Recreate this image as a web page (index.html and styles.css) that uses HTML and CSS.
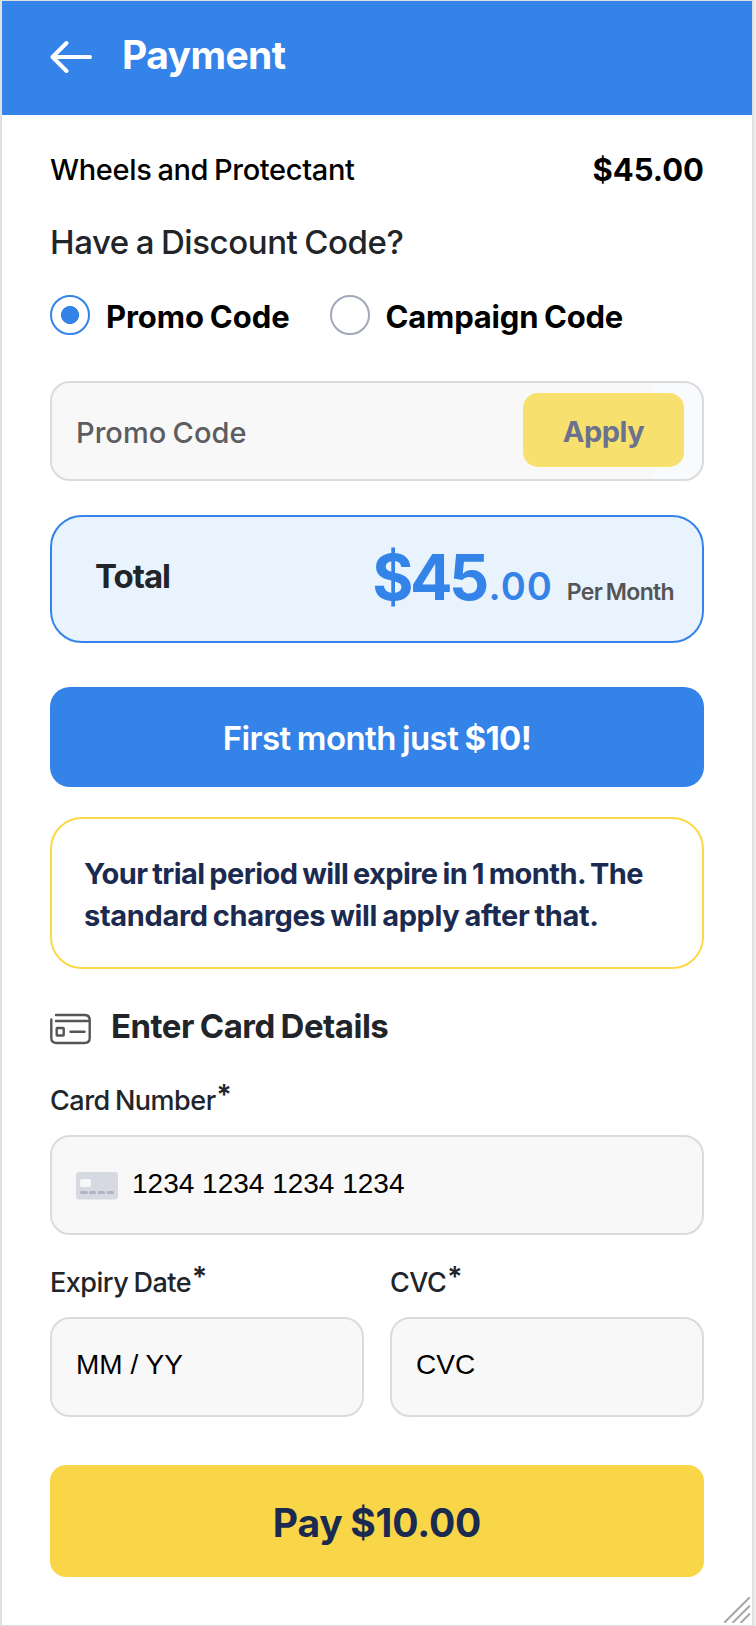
FILE: index.html
```html
<!DOCTYPE html>
<html lang="en">
<head>
    <meta charset="UTF-8">
    <title>Payment</title>
    <link rel="stylesheet" href="styles.css">
</head>
<body>
    <div class="screen">
        <header class="header">
            <svg class="back" width="42" height="34" viewBox="0 0 42 34" fill="none" stroke="#fff" stroke-width="4" stroke-linecap="round" stroke-linejoin="round">
                <path d="M40 17H3M16.500 3L2.500 17L16.500 31"/>
            </svg>
            <h1 class="title">Payment</h1>
        </header>

        <main class="content">
            <div class="item">
                <span class="item-name">Wheels and Protectant</span>
                <span class="item-price">$45.00</span>
            </div>

            <h2 class="question">Have a Discount Code?</h2>

            <div class="options">
                <label class="option">
                    <input type="radio" name="code" class="radio" checked>
                    <span class="promo-label">Promo Code</span>
                </label>
                <label class="option">
                    <input type="radio" name="code" class="radio">
                    <span class="campaign-label">Campaign Code</span>
                </label>
            </div>

            <div class="promo">
                <input type="text" class="promo-input" placeholder="Promo Code">
                <button class="apply">Apply</button>
            </div>

            <div class="total">
                <span class="total-label">Total</span>
                <div class="amount">
                    <span class="dollars">$45</span>
                    <span class="cents">.00</span>
                    <span class="period">Per Month</span>
                </div>
            </div>

            <div class="offer">First month just <b>$10!</b></div>

            <p class="notice">Your trial period will expire in 1 month. The<br><span class="notice-end">standard charges will apply after that.</span></p>

            <div class="card-title">
                <svg width="42" height="32" viewBox="0 0 42 32" fill="none" stroke="#555" stroke-width="2.400" stroke-linecap="round">
                    <path d="M6 2H34.500Q39.700 2 39.700 7V25Q39.700 30 34.500 30H6.500Q1.300 30 1.300 25V6.500M6 8H39"/>
                    <rect x="6.700" y="15" width="7" height="7.500" rx="0.500"/>
                    <path d="M20.500 18.700H34.500"/>
                </svg>
                <h2>Enter Card Details</h2>
            </div>

            <div class="field">
                <label class="field-label">Card Number<span class="star">*</span></label>
                <div class="field-box">
                    <svg class="card-icon" width="42" height="28" viewBox="0 0 42 28">
                        <rect width="42" height="27.500" rx="3" fill="#d6d9e1"/>
                        <rect x="4" y="7" width="11" height="8" rx="2" fill="#f8f8f8"/>
                        <path d="M5.500 20.500H10.500M14.500 20.500H18.500M23 20.500H27.500M32 20.500H36.500" stroke="#b0b5c6" stroke-width="3" stroke-linecap="round"/>
                    </svg>
                    <input type="text" placeholder="1234 1234 1234 1234">
                </div>
            </div>

            <div class="row">
                <div class="field">
                    <label class="field-label">Expiry Date<span class="star">*</span></label>
                    <div class="field-box"><input type="text" placeholder="MM / YY"></div>
                </div>
                <div class="field">
                    <label class="field-label">CVC<span class="star">*</span></label>
                    <div class="field-box"><input type="text" placeholder="CVC"></div>
                </div>
            </div>

            <button class="pay">Pay $10.00</button>
        </main>

        <svg class="grip" width="26" height="26" viewBox="0 0 26 26" stroke="#a6a6a6" stroke-width="2">
            <path d="M0 26L26 0M8.500 26L26 8.500M16.500 26L26 16.500"/>
        </svg>
    </div>
</body>
</html>
```
FILE: styles.css
```css
* {
    box-sizing: border-box;
}
body {
    margin: 0;
    background: #ececec;
    font-family: Inter, "Liberation Sans", sans-serif;
    color: #212529;
}
h1, h2, p {
    margin: 0;
}
input, button {
    font-family: inherit;
    border: none;
    padding: 0;
}
.screen {
    position: relative;
    width: 754px;
    height: 1626px;
    background: #fff;
    border: 2px solid #e0e0e0;
    border-top-width: 1px;
    border-bottom-width: 1px;
    word-spacing: -1.5px;
}
.header {
    display: flex;
    align-items: center;
    height: 114px;
    padding: 0 48px;
    gap: 30px;
    background: #3483e8;
}
.back {
    margin-bottom: 2px;
}
.title {
    padding-bottom: 6px;
    font-size: 39px;
    font-weight: 700;
    line-height: 50px;
    letter-spacing: -0.6px;
    color: #fff;
}
.content {
    padding: 35px 48px 0;
}
.item {
    display: flex;
    justify-content: space-between;
    height: 40px;
    line-height: 40px;
    color: #000;
}
.item-name {
    font-size: 29px;
    font-weight: 500;
    letter-spacing: -0.34px;
}
.item-price {
    font-size: 31px;
    font-weight: 700;
}
.question {
    margin-top: 32px;
    font-size: 33px;
    font-weight: 500;
    line-height: 40px;
    letter-spacing: -0.42px;
}
.options {
    display: flex;
    gap: 40px;
    margin-top: 33px;
}
.option {
    display: flex;
    gap: 16px;
    height: 40px;
    font-size: 31px;
    font-weight: 700;
    line-height: 44px;
    color: #000;
}
.promo-label {
    letter-spacing: -0.05px;
}
.campaign-label {
    letter-spacing: -0.2px;
}
.radio {
    appearance: none;
    width: 40px;
    height: 40px;
    margin: 0;
    border: 2px solid #a0a8ba;
    border-radius: 50%;
}
.radio:checked {
    border-color: #3483e8;
    background: radial-gradient(circle, #3483e8 8.7px, transparent 9.3px);
}
.promo {
    display: flex;
    align-items: center;
    height: 100px;
    margin-top: 46px;
    padding-right: 18px;
    border: 2px solid #dadbde;
    border-radius: 20px;
    background: linear-gradient(to right, #f8f8f8 602px, #f8fafc 602px);
}
.promo-input {
    flex: 1;
    min-width: 0;
    height: 60px;
    padding: 2px 0 0 24px;
    background: transparent;
    font-size: 29px;
    font-weight: 500;
    letter-spacing: 0.05px;
    word-spacing: -1.5px;
}
.promo-input::placeholder {
    color: #5b5d60;
}
.apply {
    width: 161px;
    height: 74px;
    margin-bottom: 2px;
    padding-top: 2px;
    border-radius: 15px;
    background: #f8e06f;
    color: #6b728e;
    font-size: 29px;
    font-weight: 700;
    letter-spacing: -0.5px;
}
.total {
    display: flex;
    justify-content: space-between;
    height: 128px;
    margin-top: 34px;
    padding: 0 28px 0 43px;
    border: 2px solid #3483e8;
    border-radius: 32px;
    background: #e8f3fd;
}
.total-label {
    font-size: 33px;
    font-weight: 700;
    line-height: 118px;
    letter-spacing: -1px;
}
.amount {
    display: flex;
    align-items: baseline;
    line-height: 120px;
    color: #3483e8;
}
.dollars {
    font-size: 63px;
    font-weight: 700;
    letter-spacing: -3.6px;
}
.cents {
    margin-left: 3px;
    font-size: 38px;
    font-weight: 600;
    letter-spacing: 1px;
}
.period {
    padding-bottom: 2px;
    margin-left: 14px;
    font-size: 23px;
    font-weight: 600;
    letter-spacing: -0.67px;
    color: #555;
}
.offer {
    height: 100px;
    margin-top: 44px;
    border-radius: 20px;
    background: #3483e8;
    color: #fff;
    font-size: 33px;
    font-weight: 600;
    line-height: 102px;
    letter-spacing: -0.6px;
    text-align: center;
}
.offer b {
    font-weight: 700;
}
.notice {
    height: 152px;
    margin-top: 30px;
    padding: 34px 32px 0;
    border: 2px solid #fad847;
    border-radius: 32px;
    color: #1b2a50;
    font-size: 29px;
    font-weight: 700;
    line-height: 42px;
    letter-spacing: -0.57px;
    white-space: nowrap;
}
.notice-end {
    letter-spacing: -0.34px;
}
.card-title {
    display: flex;
    align-items: center;
    gap: 19px;
    height: 40px;
    margin-top: 40px;
}
.card-title h2 {
    padding-bottom: 6px;
    font-size: 33px;
    font-weight: 700;
    line-height: 40px;
    letter-spacing: -0.5px;
}
.field {
    flex: 1;
    min-width: 0;
    margin-top: 27px;
}
.card-title + .field {
    margin-top: 31px;
}
.field-label {
    display: block;
    height: 40px;
    font-size: 27px;
    font-weight: 500;
    line-height: 42px;
    letter-spacing: -0.5px;
}
.star {
    margin-left: 1px;
    font-size: 28px;
    font-weight: 600;
    line-height: 0;
    vertical-align: 5px;
}
.field-box {
    display: flex;
    align-items: center;
    height: 100px;
    margin-top: 15px;
    padding: 0 24px;
    border: 2px solid #dadae0;
    border-radius: 20px;
    background: #f8f8f8;
}
.field-box input {
    flex: 1;
    min-width: 0;
    height: 60px;
    padding-bottom: 3px;
    background: transparent;
    font-family: "Liberation Sans", Arial, sans-serif;
    font-size: 28px;
    word-spacing: 0;
}
.field-box input::placeholder {
    color: #000;
}
.row .field-box input {
    padding-bottom: 5px;
}
.card-icon {
    margin: 2px 14px 0 0;
}
.row {
    display: flex;
    gap: 26px;
}
.pay {
    display: block;
    width: 100%;
    height: 112px;
    margin-top: 48px;
    padding-top: 2px;
    border-radius: 16px;
    background: #f9d648;
    color: #1b2a50;
    font-size: 39px;
    font-weight: 700;
    letter-spacing: -0.15px;
    word-spacing: -1.5px;
}
/* resize handle over the corner of the screen */
.grip {
    position: absolute;
    right: 2px;
    bottom: 2px;
}
```
